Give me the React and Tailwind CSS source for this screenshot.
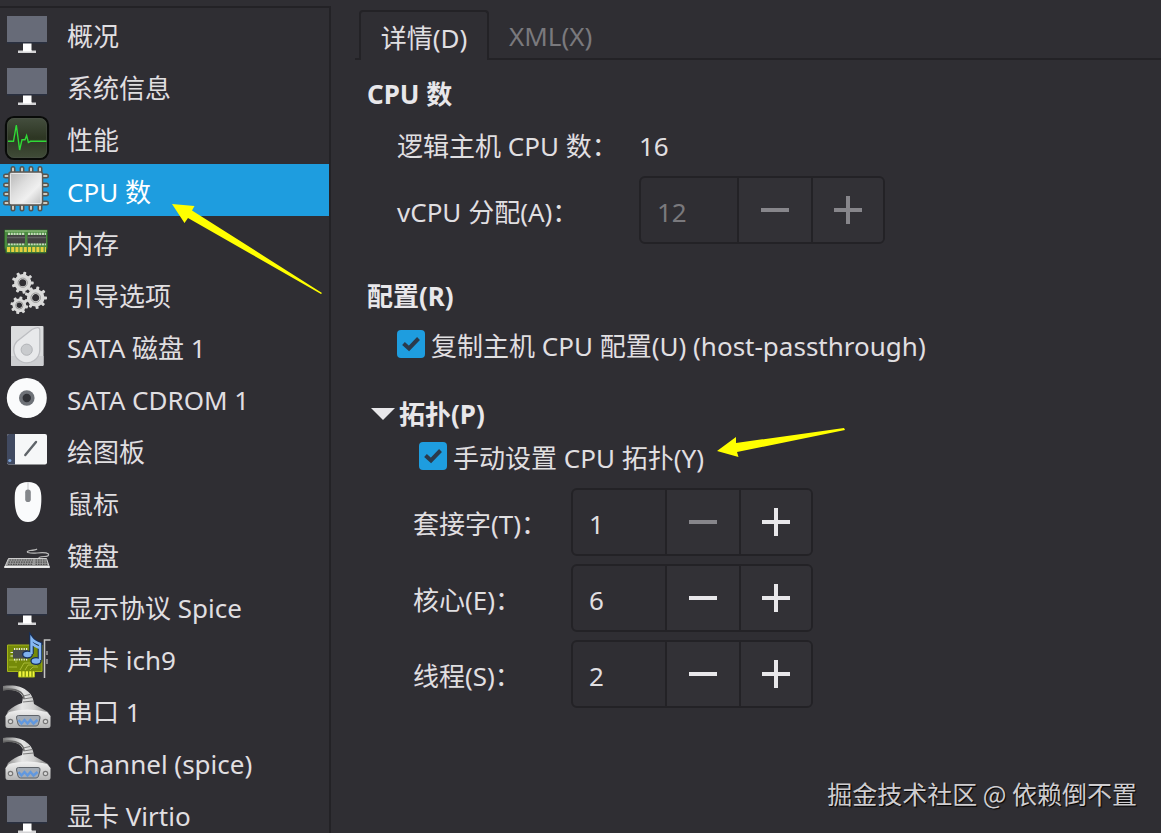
import React, { useState } from 'react';

const chipPins = [12, 21, 30, 39];

function MonitorIcon() {
  return (
    <svg viewBox="0 0 52 52" className="w-[52px] h-[52px] shrink-0" aria-hidden="true">
      <rect x="7" y="8" width="40" height="26" fill="#676b78" />
      <rect x="7" y="34" width="40" height="1.5" fill="#2a3040" />
      <rect x="23" y="35.5" width="8.5" height="8" fill="#fff" />
      <rect x="18" y="42.5" width="18" height="2.5" fill="#d4d4d6" />
      <rect x="23" y="42" width="8.5" height="1.5" fill="#fff" />
    </svg>
  );
}

function PerformanceIcon() {
  return (
    <svg viewBox="0 0 52 52" className="w-[52px] h-[52px] shrink-0" aria-hidden="true">
      <defs>
        <linearGradient id="perf" x1="0" y1="0" x2="0" y2="1">
          <stop offset="0" stopColor="#454f3f" />
          <stop offset="0.5" stopColor="#2d3623" />
          <stop offset="1" stopColor="#414d39" />
        </linearGradient>
      </defs>
      <rect x="6" y="5" width="42" height="42" rx="8" fill="url(#perf)" stroke="#090b09" strokeWidth="2.2" />
      <rect x="7.5" y="6.5" width="39" height="39" rx="6.5" fill="none" stroke="#4b5248" strokeWidth="0.6" />
      <path d="M8 29.3H13.5L16.3 13L19.6 38L22 27.8H25L26.6 23.5L28.4 30.5L30.5 29.3H46.5" fill="none" stroke="#2fdb36" strokeWidth="1.4" />
    </svg>
  );
}

function CpuIcon() {
  return (
    <svg viewBox="0 0 52 52" className="w-[52px] h-[52px] shrink-0" aria-hidden="true">
      <defs>
        <linearGradient id="chip" x1="0" y1="0" x2="1" y2="1">
          <stop offset="0" stopColor="#b5b5b5" />
          <stop offset="0.4" stopColor="#dedede" />
          <stop offset="0.65" stopColor="#f0f0f0" />
          <stop offset="1" stopColor="#b9b9b9" />
        </linearGradient>
      </defs>
      {chipPins.map((p) => (
        <g key={p}>
          <path d={`M${p + 1} 4.5V45M5.5 ${p}H46.5`} stroke="#56544f" strokeWidth="5" strokeLinecap="round" />
          <path d={`M${p + 1} 4.5V45M5.5 ${p}H46.5`} stroke="#cfcbc0" strokeWidth="2" strokeLinecap="round" />
        </g>
      ))}
      <rect x="9" y="8" width="33.5" height="33" rx="2" fill="url(#chip)" stroke="#5c5a56" strokeWidth="1.6" />
      <rect x="10.5" y="9.5" width="30.5" height="30" rx="1" fill="none" stroke="#e8e8e8" strokeWidth="1" />
    </svg>
  );
}

function MemoryIcon() {
  return (
    <svg viewBox="0 0 52 52" className="w-[52px] h-[52px] shrink-0" aria-hidden="true">
      <path d="M4.5 14H47.5V31L46 37H6L4.5 31Z" fill="#4b8b40" stroke="#2e5a2a" strokeWidth="1" />
      <path d="M5 15H47" stroke="#86b874" strokeWidth="1.6" />
      <path d="M8 18H25M28 18H46M8 28H25M28 28H46" stroke="#c2dbb8" strokeWidth="2.4" strokeDasharray="2 0.8" />
      <rect x="7" y="19" width="18" height="8.4" fill="#424242" />
      <rect x="27.5" y="19" width="18.5" height="8.4" fill="#424242" />
      <path d="M7 21.5H25M27.5 21.5H46" stroke="#626262" strokeWidth="1.6" />
      <path d="M7 33.5H46" stroke="#e6cf3c" strokeWidth="5" strokeDasharray="3 1.2" />
    </svg>
  );
}

function Gear({ x, y, r, teeth }) {
  const angles = Array.from({ length: teeth }, (_, i) => (360 / teeth) * i + 12);
  return (
    <g transform={`translate(${x} ${y})`}>
      {angles.map((a) => (
        <rect key={a} x="-1.5" y={-r} width="3" height="5" rx="0.8" fill="#d9d9d9" transform={`rotate(${a})`} />
      ))}
      <circle r={r * 0.55} fill="none" stroke="#d9d9d9" strokeWidth={r * 0.46} />
      <circle r={r * 0.42} fill="none" stroke="#8d8d8d" strokeWidth="0.9" />
    </g>
  );
}

function GearsIcon() {
  return (
    <svg viewBox="0 0 52 52" className="w-[52px] h-[52px] shrink-0" aria-hidden="true">
      <Gear x={22.7} y={14.7} r={11} teeth={9} />
      <Gear x={35.7} y={29.7} r={11.3} teeth={9} />
      <Gear x={19.3} y={37.3} r={8.8} teeth={8} />
    </svg>
  );
}

function DiskIcon() {
  return (
    <svg viewBox="0 0 52 52" className="w-[52px] h-[52px] shrink-0" aria-hidden="true">
      <rect x="11" y="6" width="32.5" height="40" rx="1" fill="#dbdcde" />
      <path d="M11 36V44.5Q11 46 12.5 46H42Q43.5 46 43.5 44.5V36Z" fill="#cdced1" />
      <path d="M39.8 10V30A13 13 0 1 1 16.8 21.5L32 9.5Q39.8 5.5 39.8 10Z" fill="#e8e9eb" stroke="#bdbec2" strokeWidth="1.3" />
      <circle cx="26.7" cy="29.7" r="5.6" fill="#c9cbce" stroke="#b2b4b8" strokeWidth="1" />
    </svg>
  );
}

function CdromIcon() {
  return (
    <svg viewBox="0 0 52 52" className="w-[52px] h-[52px] shrink-0" aria-hidden="true">
      <circle cx="26.8" cy="26" r="20" fill="#fafbfc" />
      <circle cx="26.8" cy="26" r="7.8" fill="#6e7278" />
      <circle cx="26.8" cy="26" r="4.2" fill="#303237" />
    </svg>
  );
}

function TabletIcon() {
  return (
    <svg viewBox="0 0 52 52" className="w-[52px] h-[52px] shrink-0" aria-hidden="true">
      <rect x="7" y="10" width="40" height="30.5" rx="2" fill="#f6f7f8" />
      <path d="M15 10V40.5H9Q7 40.5 7 38.5V12Q7 10 9 10Z" fill="#414a61" />
      <circle cx="9.8" cy="36.5" r="1.6" fill="#7fa5d8" />
      <path d="M25.3 31L36 18" stroke="#5f6469" strokeWidth="2.4" strokeLinecap="round" />
    </svg>
  );
}

function MouseIcon() {
  return (
    <svg viewBox="0 0 52 52" className="w-[52px] h-[52px] shrink-0" aria-hidden="true">
      <path d="M28 6C37 6 41 11 41.3 20C41.8 34 39 46 28 46C17 46 14.3 34 14.8 20C15 11 19 6 28 6Z" fill="#fafbfc" />
      <path d="M28 6V14" stroke="#c4c6c9" strokeWidth="1" />
      <rect x="25.2" y="13.5" width="5.6" height="12.5" rx="2.8" fill="#84878b" />
    </svg>
  );
}

function KeyboardIcon() {
  return (
    <svg viewBox="0 0 52 52" className="w-[52px] h-[52px] shrink-0" aria-hidden="true">
      <path d="M37 21Q36 22 30 22.5Q26 23.5 28 24.5Q31 25.5 37 25Q46 24 48.5 26Q49.5 28.5 44 28.5Q38.5 28.5 38.5 31" fill="none" stroke="#b9b9b9" strokeWidth="1.2" />
      <path d="M8.5 30.5H46.5L49.5 39.5H4.5Z" fill="#9a9a9a" stroke="#d8d8d8" strokeWidth="0.9" />
      <path d="M9.5 32H33M8.5 34.2H33M8 36.4H33M35.5 32H46.5M35.5 34.2H47M35.5 36.4H47.5" stroke="#4d4d4d" strokeWidth="1.2" strokeDasharray="1.6 0.9" />
      <path d="M4.5 38.8H49.5" stroke="#f0f0f0" strokeWidth="1.8" />
    </svg>
  );
}

function SoundCardIcon() {
  return (
    <svg viewBox="0 0 52 52" className="w-[52px] h-[52px] shrink-0" aria-hidden="true">
      <path d="M7.5 13H42V39.5H34.5V45H18.5V39.5H7.5Z" fill="#758a09" stroke="#a5b61b" strokeWidth="1" />
      <path d="M9 28H16V31M9 35H17M20 38L24 31H31M25 38L28 33H37M30 38L33 35H38" fill="none" stroke="#b6c73f" strokeWidth="0.8" />
      <path d="M14 17H28M14 27.5H28" stroke="#e9e9de" strokeWidth="2" strokeDasharray="1.2 1.2" />
      <path d="M10.5 20.5H13M10.5 24H13" stroke="#e9e9de" strokeWidth="1.2" />
      <rect x="13" y="18" width="15" height="8.5" fill="#4a4d4d" />
      <path d="M19 42H34" stroke="#eef23c" strokeWidth="5.5" strokeDasharray="2.2 1.2" />
      <path d="M31.5 22V6.5Q34 10 40 12V28" fill="none" stroke="#16305d" strokeWidth="4.6" />
      <ellipse cx="27.5" cy="22.5" rx="4.8" ry="3.4" fill="#7fb1ee" stroke="#16305d" strokeWidth="1.3" />
      <ellipse cx="36" cy="29" rx="5" ry="3.4" fill="#7fb1ee" stroke="#16305d" strokeWidth="1.3" />
      <path d="M31.5 22V6.5Q34 10 40 12V28M31.5 10.5Q34 14 40 16" fill="none" stroke="#86b8f3" strokeWidth="2.4" />
      <path d="M50.5 8H44.5V46" fill="none" stroke="#c5c5c5" strokeWidth="1.5" />
      <path d="M47 19V23M47 27V32" stroke="#a9a9a9" strokeWidth="1.4" />
    </svg>
  );
}

function SerialIcon() {
  return (
    <svg viewBox="0 0 52 52" className="w-[52px] h-[52px] shrink-0" aria-hidden="true">
      <defs>
        <linearGradient id="plug" x1="0" y1="0" x2="1" y2="0">
          <stop offset="0" stopColor="#777777" />
          <stop offset="0.4" stopColor="#e6e6e6" />
          <stop offset="0.65" stopColor="#cfcfcf" />
          <stop offset="1" stopColor="#757575" />
        </linearGradient>
        <linearGradient id="plugBase" x1="0" y1="0" x2="0" y2="1">
          <stop offset="0" stopColor="#f2f2f2" />
          <stop offset="1" stopColor="#b5b5b5" />
        </linearGradient>
      </defs>
      <path d="M3 2C14 0.5 22 2.5 26 6Q31 9 33 15L34 20L48 28L50.5 33H5.5L8 27Q15 21 22 19L23 13Q20 7 12 6Q8 5.5 3 6.5Z" fill="url(#plug)" />
      <path d="M3 5.5Q14 4 21 8.5Q24 11 24 15" fill="none" stroke="#666" strokeWidth="1.5" />
      <path d="M23 12L30 10.5M23.5 15L32.5 13.5M23 18L33.5 17" stroke="#6f6f6f" strokeWidth="0.9" />
      <path d="M9 28Q27 23 47 28L50.5 32V41.5Q50.5 44 48 44H8Q5.5 44 5.5 41.5V32Z" fill="url(#plugBase)" />
      <path d="M18.5 31.5H38Q40.5 31.5 40 34L38.5 40Q38 42 36 42H20.5Q18.5 42 18 40L16.5 34Q16 31.5 18.5 31.5Z" fill="#a3abb5" stroke="#5f646b" strokeWidth="1" />
      <path d="M18.5 36L21.5 39.5L24.5 36L27.5 39.5L30.5 36L33.5 39.5L37.5 36" fill="none" stroke="#6198df" strokeWidth="2.4" />
      <circle cx="10.5" cy="37.5" r="2.2" fill="#d9d9d9" stroke="#777" strokeWidth="1.2" />
      <circle cx="45.5" cy="37.5" r="2.2" fill="#d9d9d9" stroke="#777" strokeWidth="1.2" />
    </svg>
  );
}

const devices = [
  { label: '概况', Icon: MonitorIcon },
  { label: '系统信息', Icon: MonitorIcon },
  { label: '性能', Icon: PerformanceIcon },
  { label: 'CPU 数', Icon: CpuIcon },
  { label: '内存', Icon: MemoryIcon },
  { label: '引导选项', Icon: GearsIcon },
  { label: 'SATA 磁盘 1', Icon: DiskIcon },
  { label: 'SATA CDROM 1', Icon: CdromIcon },
  { label: '绘图板', Icon: TabletIcon },
  { label: '鼠标', Icon: MouseIcon },
  { label: '键盘', Icon: KeyboardIcon },
  { label: '显示协议 Spice', Icon: MonitorIcon },
  { label: '声卡 ich9', Icon: SoundCardIcon },
  { label: '串口 1', Icon: SerialIcon },
  { label: 'Channel (spice)', Icon: SerialIcon },
  { label: '显卡 Virtio', Icon: MonitorIcon }
];

function MinusGlyph() {
  return (
    <svg viewBox="0 0 28 28" className="w-7 h-7" aria-hidden="true">
      <path d="M0 14H28" stroke="currentColor" strokeWidth="4" />
    </svg>
  );
}

function PlusGlyph() {
  return (
    <svg viewBox="0 0 28 28" className="w-7 h-7" aria-hidden="true">
      <path d="M0 14H28M14 0V28" stroke="currentColor" strokeWidth="4" />
    </svg>
  );
}

function SpinButton({ id, value, onChange, min = 1, disabled = false, wide = false }) {
  const buttonStyle = 'flex items-center justify-center border-l-2 border-[#232226] bg-[#323136] text-[#e8e7ea] disabled:text-[#87868b]';
  return (
    <div className="flex h-[68px] w-fit rounded-md border-2 border-[#232226] overflow-hidden">
      <input
        id={id}
        type="text"
        inputMode="numeric"
        value={value}
        disabled={disabled}
        onChange={(e) => onChange(Number(e.target.value) || min)}
        className={`${wide ? 'w-24' : 'w-[92px]'} bg-transparent pl-4 pt-1 outline-none text-[#e0dfe1] disabled:text-[#7a797d]`}
      />
      <button type="button" aria-label="-" disabled={disabled || value <= min} onClick={() => onChange(value - 1)} className={`w-[74px] ${buttonStyle}`}>
        <MinusGlyph />
      </button>
      <button type="button" aria-label="+" disabled={disabled} onClick={() => onChange(value + 1)} className={`w-[72px] ${buttonStyle}`}>
        <PlusGlyph />
      </button>
    </div>
  );
}

function Checkbox({ checked, onChange, children }) {
  return (
    <label className="flex items-start h-9 gap-[6px]">
      <span className="grid shrink-0 pt-[2px]">
        <input
          type="checkbox"
          checked={checked}
          onChange={(e) => onChange(e.target.checked)}
          className="appearance-none col-start-1 row-start-1 w-7 h-7 rounded bg-[#3a393f] checked:bg-[#1e9ddf]"
        />
        {checked && (
          <svg viewBox="0 0 28 28" className="col-start-1 row-start-1 w-7 h-7 pointer-events-none" aria-hidden="true">
            <path d="M6.5 13.5L12 18.5L21.5 8.5" fill="none" stroke="#2b3a4b" strokeWidth="4" />
          </svg>
        )}
      </span>
      <span>{children}</span>
    </label>
  );
}

export default function App() {
  const [selected, setSelected] = useState(3);
  const [tab, setTab] = useState('details');
  const [passthrough, setPassthrough] = useState(true);
  const [manual, setManual] = useState(true);
  const [open, setOpen] = useState(true);
  const [sockets, setSockets] = useState(1);
  const [cores, setCores] = useState(6);
  const [threads, setThreads] = useState(2);

  const topology = [
    { id: 'sockets', label: '套接字(T)：', value: sockets, set: setSockets },
    { id: 'cores', label: '核心(E)：', value: cores, set: setCores },
    { id: 'threads', label: '线程(S)：', value: threads, set: setThreads }
  ];

  return (
    <div className="relative flex h-screen overflow-hidden bg-[#2f2e33] text-[#e0dfe1] text-[26px] leading-9 font-['Noto_Sans','Noto_Sans_CJK_SC',sans-serif]">
      <aside className="w-[331px] shrink-0 pt-[6px]">
        <ul className="h-full overflow-hidden border-t-2 border-r-2 border-[#232226]">
          {devices.map(({ label, Icon }, i) => (
            <li key={label}>
              <button
                type="button"
                onClick={() => setSelected(i)}
                className={`flex items-center w-full h-[52px] text-left gap-[15px] whitespace-nowrap ${selected === i ? 'bg-[#1e9ddf] text-white' : ''}`}
              >
                <Icon />
                <span className="pt-1">{label}</span>
              </button>
            </li>
          ))}
        </ul>
      </aside>

      <main className="flex-1 min-w-0 pt-[10px]">
        <div className="flex h-[50px] pl-6" role="tablist">
          <div className="w-1 border-b-2 border-[#232226]"></div>
          <button type="button" role="tab" aria-selected={tab === 'details'} onClick={() => setTab('details')} className="w-[130px] pt-1 border-2 border-b-0 border-[#232226] rounded-t-sm">
            详情(D)
          </button>
          <div className="flex-1 border-b-2 border-[#232226]">
            <button type="button" role="tab" aria-selected={tab === 'xml'} onClick={() => setTab('xml')} className="h-full px-5 pt-1 text-[#7a797d]">
              XML(X)
            </button>
          </div>
        </div>

        <div className="pl-9 pt-4">
          <section>
            <h2 className="font-bold text-[#e8e7ea]">CPU 数</h2>
            <div className="flex items-center pl-[30px] mt-4">
              <span className="w-[242px] shrink-0">逻辑主机 CPU 数：</span>
              <span>16</span>
            </div>
            <div className="flex items-center pl-[30px] mt-3">
              <label htmlFor="vcpu" className="w-[242px] shrink-0 pt-1">vCPU 分配(A)：</label>
              <SpinButton id="vcpu" value={sockets * cores * threads} onChange={() => {}} disabled wide />
            </div>
          </section>

          <section className="mt-[34px]">
            <h2 className="font-bold text-[#e8e7ea]">配置(R)</h2>
            <div className="pl-[30px] mt-[14px]">
              <Checkbox checked={passthrough} onChange={setPassthrough}>复制主机 CPU 配置(U) (host-passthrough)</Checkbox>
            </div>
          </section>

          <section className="mt-8">
            <button type="button" aria-expanded={open} onClick={() => setOpen(!open)} className="flex items-center gap-1 pl-1 font-bold text-[#e8e7ea]">
              <svg viewBox="0 0 24 12" className="w-6 h-3" aria-hidden="true">
                <path d="M0 0H24L12 12Z" fill="currentColor" />
              </svg>
              拓扑(P)
            </button>
            {open && (
              <div className="pl-[46px] mt-2">
                <div className="pl-[6px]">
                  <Checkbox checked={manual} onChange={setManual}>手动设置 CPU 拓扑(Y)</Checkbox>
                </div>
                <div className="flex flex-col gap-2 mt-3">
                  {topology.map((row) => (
                    <div key={row.id} className="flex items-center">
                      <label htmlFor={row.id} className="w-[158px] shrink-0 pt-1">{row.label}</label>
                      <SpinButton id={row.id} value={row.value} onChange={row.set} />
                    </div>
                  ))}
                </div>
              </div>
            )}
          </section>
        </div>
      </main>

      {/* Pointer arrows drawn over the window */}
      <svg viewBox="0 0 150 90" className="absolute left-[172px] top-[204px] w-[150px] h-[90px] pointer-events-none" aria-hidden="true">
        <path d="M0 0L22.5 2L20 6.5L150 89L149 90L16 14L12.5 19Z" fill="#ffff00" />
      </svg>
      <svg viewBox="0 0 128 30" className="absolute left-[717px] top-[428px] w-32 h-[30px] pointer-events-none" aria-hidden="true">
        <path d="M0 23L19 9L19 15L127 0L128 2L20 24L21.5 29Z" fill="#ffff00" />
      </svg>

      <div className="absolute right-6 bottom-[22px] text-[25px] text-[#cfcdd0] [text-shadow:1px_1px_1px_#000] font-['Noto_Sans_CJK_SC',sans-serif]">掘金技术社区 @ 依赖倒不置</div>
    </div>
  );
}
